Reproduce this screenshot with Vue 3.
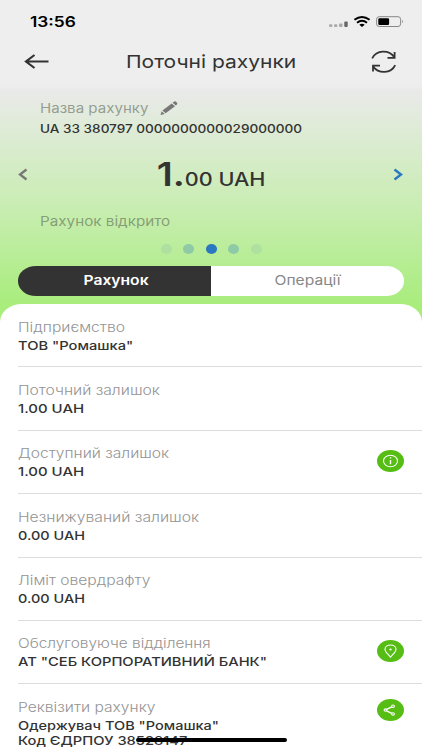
<script setup>
import { ref } from 'vue'

const tab = ref('account')
const page = ref(2)

const rows = [
  { label: 'Підприємство', labelWidth: 107, values: [{ text: 'ТОВ "Ромашка"', width: 115 }] },
  { label: 'Поточний залишок', labelWidth: 142, values: [{ text: '1.00 UAH', width: 66 }] },
  { label: 'Доступний залишок', labelWidth: 151, values: [{ text: '1.00 UAH', width: 66 }], icon: 'info' },
  { label: 'Незнижуваний залишок', labelWidth: 181, values: [{ text: '0.00 UAH', width: 67.5 }] },
  { label: 'Ліміт овердрафту', labelWidth: 132, values: [{ text: '0.00 UAH', width: 67.5 }] },
  { label: 'Обслуговуюче відділення', labelWidth: 193, values: [{ text: 'АТ "СЕБ КОРПОРАТИВНИЙ БАНК"', width: 249 }], icon: 'pin' },
  {
    label: 'Реквізити рахунку',
    labelWidth: 138,
    values: [
      { text: 'Одержувач ТОВ "Ромашка"', width: 201 },
      { text: 'Код ЄДРПОУ 38528147', width: 169 },
      { text: 'Рік', width: 22 }
    ],
    icon: 'share'
  }
]

// stretches a line of text to the given width
const vFit = {
  mounted(el, { value }) {
    el.style.transform = `scaleX(${value / el.offsetWidth})`
  }
}
</script>

<template>
  <div class="screen">
    <div class="status">
      <span v-fit="46" class="time">13:56</span>
      <svg class="status-icons" width="80" height="14" viewBox="0 0 80 14">
        <g fill="#aaa">
          <rect x="1" y="9.3" width="3.4" height="2.8" rx="1" />
          <rect x="6" y="9.3" width="3.4" height="2.8" rx="1" />
          <rect x="11" y="8.4" width="3.6" height="3.7" rx="1" />
          <rect x="16.3" y="6.4" width="3.4" height="5.7" rx="1" fill="#666" />
        </g>
        <g fill="none" stroke="#000" stroke-width="2">
          <path d="M26.4 4.8Q34 -.9 41.6 4.8" />
          <path d="M29 7.7Q34 4 39 7.7" />
        </g>
        <path d="M31.3 9.7Q34 7.9 36.7 9.7L34 12Z" />
        <rect x="48.6" y="1.7" width="24" height="9.8" rx="2.6" fill="none" stroke="#888" />
        <rect x="50.3" y="3.2" width="10.8" height="6.8" rx="1.2" />
        <path d="M74.2 4.7Q76 6.5 74.2 8.3Z" fill="#777" />
      </svg>
    </div>

    <header class="bar">
      <svg width="26" height="16" viewBox="0 0 26 16" fill="none" stroke="#333" stroke-width="2.2">
        <path d="M24.5 7.5H2M10.5 1L2 7.5L10.5 14" />
      </svg>
      <h1 class="title"><span v-fit="170">Поточні рахунки</span></h1>
      <svg width="26" height="24" viewBox="0 0 26 24" fill="none" stroke="#333" stroke-width="1.8">
        <path d="M1.2 8.4C5.5 -.3 18 -.5 23.3 7.2M23.6 2V7.8H16.5" />
        <path d="M24.2 15.1C20 23.9 7.5 24 2.2 16.4M2 21.5V15.7H9" />
      </svg>
    </header>

    <section class="account">
      <div class="name">
        <span v-fit="109" class="muted">Назва рахунку</span>
        <svg class="pencil" width="18" height="15" viewBox="0 0 18 15" fill="#777">
          <path d="M.5 14L1.6 10.3L4.7 13ZM2.4 9.4L11.7 2.4L15 5.2L5.6 12.2ZM12.6 1.7L14.2 .6Q15.2 0 16.1 .8L17 1.7Q17.9 2.6 16.9 3.6L15.8 4.5Z" />
        </svg>
      </div>
      <div class="iban"><span v-fit="262">UA 33 380797 0000000000029000000</span></div>
      <div class="balance">
        <svg width="10" height="13" viewBox="0 0 10 13" fill="none" stroke="#777" stroke-width="2.3">
          <path d="M8.5 1.5L2 6.5L8.5 11.5" />
        </svg>
        <div v-fit="110" class="amount"><b>1.</b>00 UAH</div>
        <svg width="10" height="13" viewBox="0 0 10 13" fill="none" stroke="#2a78c2" stroke-width="2.4">
          <path d="M1.5 1.5L8 6.5L1.5 11.5" />
        </svg>
      </div>
      <div class="state"><span v-fit="130" class="muted">Рахунок відкрито</span></div>
      <div class="dots">
        <i v-for="n in 5" :key="n" :class="{ near: Math.abs(n - 1 - page) === 1, active: n - 1 === page }" @click="page = n - 1"></i>
      </div>
    </section>

    <div class="tabs">
      <button :class="{ on: tab === 'account' }" @click="tab = 'account'"><span v-fit="65">Рахунок</span></button>
      <button :class="{ on: tab === 'operations' }" @click="tab = 'operations'"><span v-fit="66">Операції</span></button>
    </div>

    <main class="card">
      <div v-for="row in rows" :key="row.label" class="row">
        <div class="texts">
          <div class="label"><span v-fit="row.labelWidth">{{ row.label }}</span></div>
          <div v-for="v in row.values" :key="v.text" class="value"><span v-fit="v.width">{{ v.text }}</span></div>
        </div>
        <button v-if="row.icon" class="round" :class="row.icon">
          <svg width="27" height="22" viewBox="0 0 27 22" fill="none" stroke="#fff" stroke-width="1.1">
            <template v-if="row.icon === 'info'">
              <ellipse cx="13.5" cy="11" rx="7" ry="5.8" />
              <path d="M13.5 10V14.2M13.5 7.2V8.6" stroke-width="1.4" />
            </template>
            <template v-else-if="row.icon === 'pin'">
              <path d="M13.5 17.2C11.5 14.5 8 12 8 9.2C8 6.8 10.4 5 13.5 5S19 6.8 19 9.2C19 12 15.5 14.5 13.5 17.2Z" />
              <ellipse cx="13.5" cy="9.5" rx="1.2" ry="1" fill="#fff" stroke="none" />
            </template>
            <template v-else>
              <path d="M14.8 7.8L9.5 10.4M9.5 11.8L14.8 14.3" stroke-width="1.4" />
              <ellipse cx="8.5" cy="11.1" rx="1.4" ry="1.2" />
              <ellipse cx="16" cy="7.2" rx="1.4" ry="1.2" />
              <ellipse cx="16" cy="14.9" rx="1.4" ry="1.2" />
            </template>
          </svg>
        </button>
      </div>
    </main>
    <div class="home"></div>
  </div>
</template>

<style>
body {
  margin: 0;
  overflow: hidden;
}
</style>

<style scoped>
.screen {
  position: relative;
  display: flex;
  flex-direction: column;
  width: 422px;
  height: 750px;
  overflow: hidden;
  box-sizing: border-box;
  font-family: Inter, "Liberation Sans", sans-serif;
  color: #333;
  background: linear-gradient(#eee 0, #eee 82px, #e9eae8 92px, #c9edb3 205px, #a9ed7d 304px);
}
span {
  display: inline-block;
  white-space: nowrap;
  transform-origin: left;
}
button {
  padding: 0;
  border: 0;
  font-family: inherit;
}
svg {
  flex: none;
}
.status {
  display: flex;
  justify-content: space-between;
  height: 42px;
  padding: 14px 14px 0 30px;
  box-sizing: border-box;
}
.time {
  font-size: 14.3px;
  line-height: 16px;
  font-weight: 600;
  color: #000;
}
.status-icons {
  margin-top: 1px;
}
.bar {
  display: flex;
  align-items: center;
  height: 40px;
  padding: 0 25px 0 24px;
}
.title {
  flex: 1;
  margin: 0 0 0 76px;
  font-size: 17.8px;
  line-height: 24px;
  font-weight: 400;
}
.account {
  height: 184px;
}
.name {
  display: flex;
  height: 34px;
  padding: 17px 0 0 39.5px;
  box-sizing: border-box;
  line-height: 18px;
}
.muted {
  font-size: 13px;
  color: rgba(80, 90, 75, .55);
}
.pencil {
  margin: 2px 0 0 27px;
}
.iban {
  padding-left: 39.5px;
  margin-top: 4px;
  font-size: 11.8px;
  line-height: 18px;
  font-weight: 500;
}
.balance {
  display: flex;
  align-items: center;
  justify-content: space-between;
  height: 40px;
  margin-top: 16px;
  padding: 0 19px 0 18px;
}
.amount {
  padding: 5px 0 0 1px;
  font-size: 18.3px;
  font-weight: 500;
  line-height: 36px;
  white-space: nowrap;
}
.amount b {
  font-size: 32px;
  font-weight: 600;
}
.state {
  margin-top: 17px;
  padding-left: 39.5px;
  line-height: 18px;
}
.dots {
  display: flex;
  justify-content: center;
  gap: 11.5px;
  margin-top: 14px;
}
.dots i {
  width: 11px;
  height: 9.5px;
  border-radius: 50%;
  background: #aee19f;
}
.dots .near {
  background: #8fcaa6;
}
.dots .active {
  background: #2a78c0;
}
.tabs {
  display: grid;
  grid-template-columns: 193px 193px;
  height: 29.5px;
  margin: 0 18px 8.5px;
  border-radius: 18px / 14.75px;
  overflow: hidden;
}
.tabs button {
  background: #fff;
  color: #888;
  font-size: 13px;
  line-height: 18px;
  padding: 0 0 2px 1px;
}
.tabs button span {
  transform-origin: center;
}
.tabs .on {
  padding-left: 3px;
  background: #333;
  color: #fff;
  font-weight: 600;
}
.card {
  flex: 1;
  padding-left: 18px;
  background: #fff;
  border-radius: 22px 22px 0 0 / 18px 18px 0 0;
}
.row {
  display: flex;
  justify-content: space-between;
  height: 63.4px;
  padding: 13.5px 18px 0 0;
  box-sizing: border-box;
  border-bottom: 1px solid #ddd;
}
.row:last-child {
  border: 0;
}
.label {
  height: 19px;
  line-height: 18px;
  font-size: 13px;
  font-weight: 350;
  color: #949494;
}
.value {
  height: 15px;
  line-height: 18px;
  font-size: 12px;
  font-weight: 550;
}
.round {
  width: 27px;
  height: 22px;
  margin-top: 6px;
  background: #55bd13;
  border-radius: 50%;
}
.round svg {
  display: block;
}
.round.share {
  margin-top: 1px;
}
.home {
  position: absolute;
  left: 136px;
  bottom: 8px;
  width: 151px;
  height: 4.5px;
  border-radius: 3px;
  background: #000;
}
</style>
